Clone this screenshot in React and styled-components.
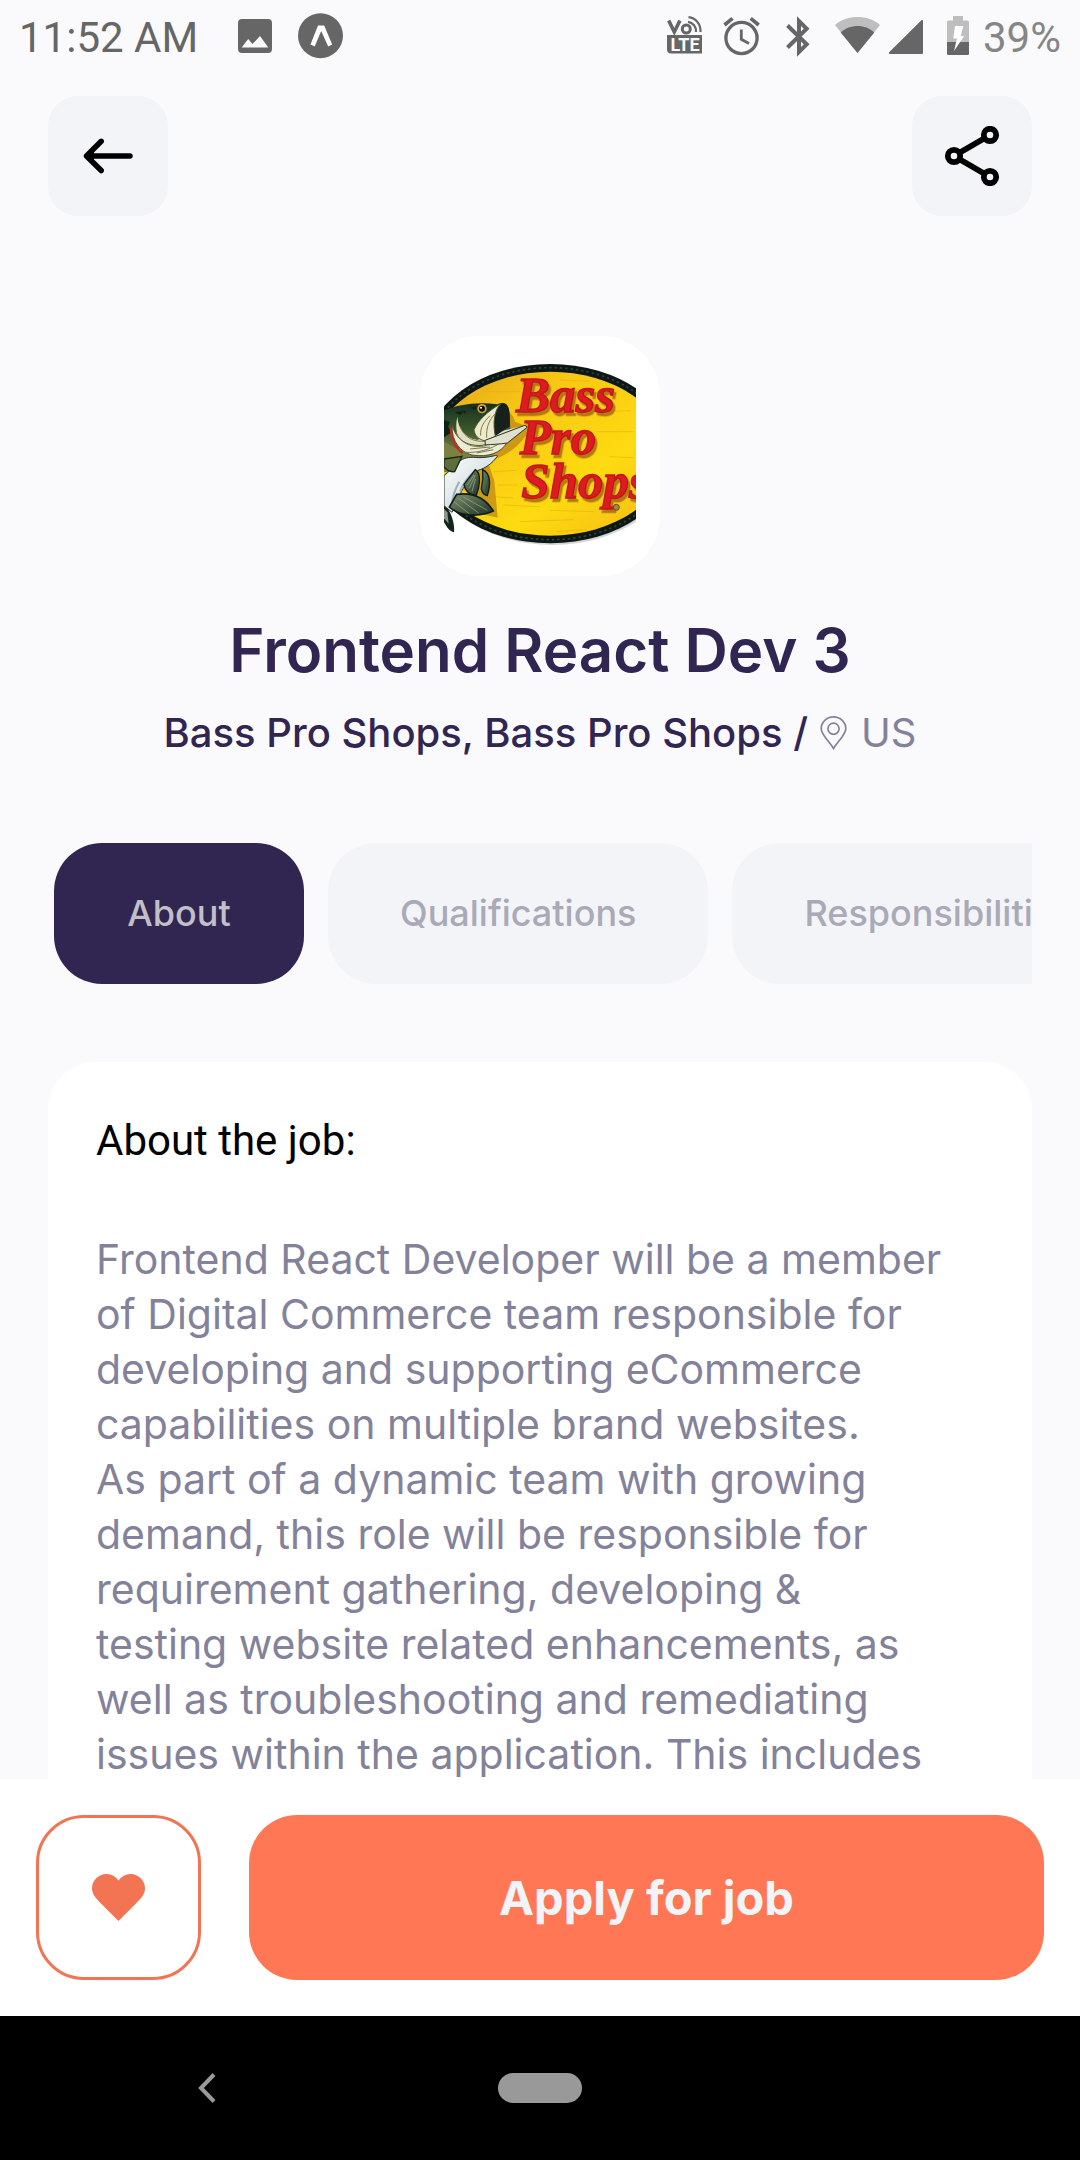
import React, { useState } from "react";
import styled, { createGlobalStyle, css } from "styled-components";

const color = {
  page: "#fafafc",
  surface: "#f3f4f8",
  primary: "#312651",
  secondary: "#83829a",
  accent: "#ff7754",
  like: "#f37453",
  status: "#666666",
};

const sans = `Inter, "Liberation Sans", sans-serif`;
const system = `Roboto, "Liberation Sans", sans-serif`;

const GlobalStyle = createGlobalStyle`
  *, *::before, *::after { box-sizing: border-box; }
  body { margin: 0; background: ${color.page}; font-family: ${sans}; }
  button { margin: 0; padding: 0; border: 0; background: none; font: inherit; cursor: pointer; }
  h1, h2, p { margin: 0; font-weight: 400; }
  svg { display: block; flex: none; }
`;

const Screen = styled.div`
  display: flex;
  flex-direction: column;
  height: 100vh;
  background: ${color.page};
`;

const StatusBar = styled.div`
  flex: none;
  display: flex;
  justify-content: space-between;
  height: 76px;
  padding: 0 19px;
  font-family: ${system};
  font-size: 42px;
  line-height: 76px;
  color: ${color.status};
`;

const StatusGroup = styled.div`
  display: flex;
  align-items: center;
`;

const Battery = styled.span`
  color: #868686;
`;

const Header = styled.header`
  flex: none;
  display: flex;
  justify-content: space-between;
  padding: 20px 48px 0;
`;

const IconButton = styled.button`
  display: flex;
  align-items: center;
  justify-content: center;
  width: 120px;
  height: 120px;
  border-radius: 30px;
  background: ${color.surface};
`;

const Content = styled.main`
  flex: 1;
  min-height: 0;
  overflow: hidden auto;
  scrollbar-width: none;
  display: flex;
  flex-direction: column;
  padding: 120px 48px 0;
`;

const Company = styled.section`
  flex: none;
  display: flex;
  flex-direction: column;
  align-items: center;
`;

const LogoBox = styled.div`
  padding: 24px;
  border-radius: 60px;
  background: #fff;
`;

const LogoWord = styled.text`
  font: italic 700 153px "Liberation Serif", serif;
  fill: #dd1c1f;
  stroke: #c4141a;
  stroke-width: 4px;
`;

const LogoWords = styled.g`
  filter: drop-shadow(7px 10px 2px rgba(160, 100, 15, 0.8));
`;

const JobTitle = styled.h1`
  margin-top: 35px;
  font-size: 60px;
  font-weight: 600;
  line-height: 78px;
  color: ${color.primary};
`;

const CompanyLine = styled.div`
  display: flex;
  align-items: center;
  margin-top: 16px;
  font-size: 40px;
  line-height: 56px;
`;

const CompanyName = styled.span`
  font-weight: 500;
  color: ${color.primary};
`;

const Location = styled.span`
  display: flex;
  align-items: center;
  gap: 14px;
  padding-left: 12px;
  color: ${color.secondary};
`;

const Tabs = styled.div`
  flex: none;
  display: flex;
  gap: 24px;
  margin-top: 82px;
  padding-left: 6px;
  overflow: auto hidden;
  scrollbar-width: none;
`;

const Tab = styled.button`
  flex: none;
  min-width: 250px;
  padding: 48px 72px;
  border-radius: 48px;
  background: ${color.surface};
  font-size: 36px;
  font-weight: 500;
  line-height: 45px;
  color: #aaa9b8;
  ${(p) =>
    p.$active &&
    css`
      background: ${color.primary};
      color: #c1c0c8;
    `}
`;

const Card = styled.section`
  flex: none;
  margin-top: 78px;
  padding: 51px 48px;
  border-radius: 48px;
  background: #fff;
`;

const CardTitle = styled.h2`
  font-family: ${system};
  font-size: 42px;
  line-height: 56px;
  color: #000;
`;

const Description = styled.p`
  margin-top: 63px;
  font-size: 41px;
  line-height: 55px;
  color: ${color.secondary};
  white-space: pre-line;
`;

const Footer = styled.footer`
  flex: none;
  display: flex;
  gap: 48px;
  padding: 36px;
  background: #fff;
`;

const LikeButton = styled.button`
  display: flex;
  align-items: center;
  justify-content: center;
  width: 165px;
  height: 165px;
  border: 3px solid ${color.like};
  border-radius: 48px;
  color: ${color.like};
`;

const ApplyButton = styled.button`
  flex: 1;
  border-radius: 48px;
  background: ${color.accent};
  font-size: 47px;
  font-weight: 700;
  color: ${color.surface};
`;

const NavBar = styled.nav`
  flex: none;
  display: grid;
  grid-template-columns: 1fr 84px 1fr;
  align-items: center;
  justify-items: center;
  height: 144px;
  background: #000;
`;

const NavBack = styled.button`
  display: flex;
  justify-content: center;
  width: 84px;
  padding: 24px 0;
  margin-right: 84px;
`;

const NavHome = styled.button`
  width: 84px;
  height: 30px;
  border-radius: 15px;
  background: #999;
`;

const StatusIcon = ({ x, width, children }) => (
  <svg width={width} height="76" viewBox={`${x} 0 ${width} 76`} fill={color.status} aria-hidden="true">
    {children}
  </svg>
);

const NotificationIcons = () => (
  <>
    <StatusIcon x={197} width={77}>
      <path
        fillRule="evenodd"
        d="M241 19h26a4 4 0 0 1 4 4v26a4 4 0 0 1-4 4h-26a4 4 0 0 1-4-4V23a4 4 0 0 1 4-4zM240.700 47.500h26.600l-8.300-11.500-7.500 8-4.300-5z"
      />
    </StatusIcon>
    <StatusIcon x={274} width={70}>
      <circle cx="319.500" cy="35.700" r="22.500" />
      <path fill="#fff" d="M309.500 44.500 317 25.500h6.200l8 19-4 2-7-15.500-6.500 15.500z" />
    </StatusIcon>
  </>
);

const SystemIcons = () => (
  <>
    <StatusIcon x={660} width={52}>
      <path d="M668.700 20.500l5.600 11.500 5.600-11.500" fill="none" stroke={color.status} strokeWidth="3.600" />
      <circle cx="686.300" cy="29" r="4" fill="none" stroke={color.status} strokeWidth="3" />
      <path
        d="M688.500 17.200c7 .6 12.500 7 12 14.800M688 21.800c5 .8 8.500 5 8 10.200"
        fill="none"
        stroke={color.status}
        strokeWidth="2.200"
      />
      <path d="M667 35h35v18.500h-31a4 4 0 0 1-4-4z" />
      <text x="685" y="51" textAnchor="middle" fontFamily="Roboto, sans-serif" fontWeight="700" fontSize="18" fill="#fafafc">
        LTE
      </text>
    </StatusIcon>
    <StatusIcon x={712} width={60}>
      <g fill="none" stroke={color.status} strokeWidth="3.300">
        <circle cx="741.500" cy="38" r="15.600" />
        <path d="M741.300 29.500v9.800l7.700 4.200" strokeWidth="2.800" />
        <path d="M724.500 25l8-6.700M758.700 25l-8-6.700" strokeWidth="3.600" />
      </g>
    </StatusIcon>
    <StatusIcon x={772} width={50}>
      <path
        d="M787.500 25.500l19.200 18.700-7.700 7.800V21l7.700 7.800-19.200 18.700"
        fill="none"
        stroke={color.status}
        strokeWidth="4"
      />
    </StatusIcon>
    <StatusIcon x={822} width={62}>
      <path fill="#bebebf" d="M857.500 53 835 25c12-10.600 33-10.600 45 0z" />
      <path d="M857.500 53 840.700 32.500c9-8.600 24.600-8.600 33.600 0z" />
    </StatusIcon>
    <StatusIcon x={884} width={51}>
      <path d="M890 54c-1.500 0-1.500-1.200-.6-2l31.800-31.500c1-.9 1.800-.5 1.800.8V52.500c0 1-.5 1.500-1.500 1.500z" />
    </StatusIcon>
    <StatusIcon x={935} width={48}>
      <path fill="#bebebf" d="M953 16h10v4.500h4.500q1.500 0 1.500 1.500v20h-22V22q0-1.500 1.500-1.500h4.500z" />
      <path d="M947 42h22v11.500q0 1.500-1.500 1.500h-19q-1.500 0-1.500-1.500z" />
      <path fill="#fff" d="M955 26h8.300l-2.600 10h3.500L954 51l3-12.500h-3.700z" />
    </StatusIcon>
  </>
);

const ArrowIcon = () => (
  <svg width="60" height="60" viewBox="78 126 60 60" aria-hidden="true">
    <path
      d="M130 156H87M101.200 141.300 86.500 156l14.700 14.500"
      fill="none"
      stroke="#000"
      strokeWidth="5.500"
      strokeLinecap="round"
      strokeLinejoin="round"
    />
    <path d="M86 156l8-7v14z" />
  </svg>
);

const ShareIcon = () => (
  <svg width="60" height="60" viewBox="942 126 60 60" aria-hidden="true">
    <g fill="none" stroke="#000" strokeWidth="5.800">
      <circle cx="990" cy="135" r="6.200" />
      <circle cx="954" cy="156" r="6.200" />
      <circle cx="990" cy="177" r="6.200" />
      <path d="M959.500 152.800l25-14.600M959.500 159.200l25 14.600" />
    </g>
  </svg>
);

const PinIcon = () => (
  <svg width="27" height="34" viewBox="0 0 27 34" fill="none" stroke={color.secondary} strokeWidth="1.700" aria-hidden="true">
    <path d="M13.500 32.500C9.500 25.500 1.200 19 1.200 12.500a12.300 11.600 0 0 1 24.600 0C25.800 19 17.500 25.500 13.500 32.500z" />
    <circle cx="13.500" cy="12.700" r="5.600" />
  </svg>
);

const HeartIcon = () => (
  <svg width="53" height="47" viewBox="0 0 53 47" fill="currentColor" aria-hidden="true">
    <path d="M26.500 47 9 29.500C3 23.500 0 19.500 0 14.500 0 6.500 6.500 0 14.500 0c5 0 9 2.200 12 6.500C29.500 2.200 33.500 0 38.500 0 46.500 0 53 6.500 53 14.500c0 5-3 9-9 15z" />
  </svg>
);

const CompanyLogo = () => (
  <svg width="192" height="192" viewBox="102 105 576 576" role="img" aria-label="Bass Pro Shops">
    <defs>
      <linearGradient id="board" x1="0" y1="0" x2="1" y2="1">
        <stop offset="0" stopColor="#e0a31c" />
        <stop offset="0.3" stopColor="#f9c714" />
        <stop offset="0.65" stopColor="#fddb10" />
        <stop offset="1" stopColor="#f3b716" />
      </linearGradient>
      <linearGradient id="back" x1="0" y1="0" x2="0" y2="1">
        <stop offset="0" stopColor="#16301f" />
        <stop offset="0.5" stopColor="#405a2c" />
        <stop offset="1" stopColor="#8b8c4a" />
      </linearGradient>
      <linearGradient id="belly" x1="0" y1="0" x2="1" y2="1">
        <stop offset="0" stopColor="#ffffff" />
        <stop offset="0.6" stopColor="#d5dfe3" />
        <stop offset="1" stopColor="#74827f" />
      </linearGradient>
      <linearGradient id="fin" x1="0" y1="0" x2="1" y2="1">
        <stop offset="0" stopColor="#829071" />
        <stop offset="1" stopColor="#1a3323" />
      </linearGradient>
    </defs>

    <ellipse cx="427" cy="394" rx="372" ry="266" fill="#b9b9b9" opacity="0.6" />
    <ellipse cx="421" cy="386" rx="375" ry="269" fill="#0d1714" />
    <ellipse cx="421" cy="386" rx="364" ry="258" fill="none" stroke="#33413d" strokeWidth="5" strokeDasharray="7 9" />
    <ellipse cx="421" cy="386" rx="352" ry="246" fill="url(#board)" />
    <g fill="none" stroke="#dfa416" strokeWidth="2" opacity="0.7">
      <path d="M220 200h110M450 165l90 4M580 260l80-3M560 320h110M300 350l-40 6M250 440l70-4M262 480h60M280 540l110 5M330 590l160-6M420 556l130 4M250 515l60 4M600 395l70 3M440 620l90-6" />
    </g>

    <path d="M180 262C230 240 300 235 315 290l48 18c-40 70-90 90-130 100l20 60 10 110-90-20z" fill="#b67d17" opacity="0.65" />

    <LogoWords>
      <LogoWord x="318" y="262">Bass</LogoWord>
      <LogoWord x="329" y="387">Pro</LogoWord>
      <LogoWord x="334" y="520">Shops</LogoWord>
    </LogoWords>
    <circle cx="619" cy="547" r="9" fill="#a8873b" stroke="#5c4a25" strokeWidth="3" />

    <path d="M102 540c14 6 34 50 30 82-14-2-24-20-30-30z" fill="#14251d" />
    <path d="M102 552l10 10 4 34-14-16z" fill="#8b9a86" />
    <path d="M102 258c40-20 100-28 160-20 18-8 32-4 36 20l4 70-50 60-60 22-90-10z" fill="url(#back)" />
    <path d="M102 285l18 6-6 14 12 16-24 16zM134 262l26-4-8 12zM180 248l20-2-4 8zM160 256l10 4-8 6z" fill="#0d2117" />
    <path d="M102 350c30 12 48 36 96 44l-60 52-36-6z" fill="#7b8140" />
    <path
      d="M102 452c14-12 30-26 50-46 16-10 30-10 54-8 40 0 58-12 56-4-16 22-36 36-58 42-16 24-34 34-50 64-8 18-14 30-28 62l-24-20z"
      fill="url(#belly)"
      stroke="#26332d"
      strokeWidth="3"
    />
    <path d="M150 500c10-30 30-50 48-66M126 540c2-30 10-50 22-70" fill="none" stroke="#9fb0b5" strokeWidth="6" />
    <path d="M102 402l54-8-22 46c-12 2-24-6-32-14z" fill="#5e6d3a" stroke="#16291b" strokeWidth="4" />
    <path d="M142 275c-10 44 4 82 34 94 30 10 60 0 84-8l70-44 24-18-92 22-60 24c-34-6-58-32-60-70z" fill="#e2e0c2" />
    <path d="M126 300c-2 50 26 82 60 90 50 8 86-6 106-38l58-48-90 44c-60 28-118 12-134-48z" fill="#ecebd4" stroke="#4a4f35" strokeWidth="3" />
    <path d="M122 308c2 38 18 64 36 76" fill="none" stroke="#c62a1f" strokeWidth="6" />
    <path d="M272 236c22-8 30 20 27 68l-44 30c-16-36-14-72 17-98z" fill="#17211c" />
    <path d="M272 236c-20 20-24 60-16 98l-30 14c-20-4-32-16-34-34 14-30 40-54 80-78z" fill="#eceacb" stroke="#53583b" strokeWidth="3" />
    <path
      d="M256 266c-18 18-28 40-26 72M240 272c-20 20-30 36-28 60M150 305c14 34 40 46 78 44M138 322c14 34 50 50 92 40M166 382c34 2 74-6 110-32M180 372l60-6M200 384l50-10"
      fill="none"
      stroke="#7d7b4d"
      strokeWidth="3"
    />
    <path d="M225 346l122-46 3 8-58 46c-24 4-46 4-66 6z" fill="#dfe0cd" stroke="#2c3527" strokeWidth="3" />
    <circle cx="216" cy="251" r="14" fill="#c9a23b" />
    <circle cx="216" cy="251" r="9" fill="#10120d" />
    <circle cx="213" cy="248" r="3" fill="#fff" />
    <path d="M196 434c16 8 16 44 2 78-18 0-34-16-36-34z" fill="url(#fin)" stroke="#0f1f17" strokeWidth="4" />
    <path d="M218 434c22 10 26 40 14 78-10-2-16-10-18-20 4-18 6-38 4-58z" fill="url(#fin)" stroke="#0f1f17" strokeWidth="4" />
    <path d="M140 508c40-6 80 2 110 50-34 16-96 20-132-12z" fill="url(#fin)" stroke="#0f1f17" strokeWidth="5" />
    <path
      d="M146 520l60 44M160 516l72 40M132 530l46 36M172 480l20-30M178 490l18-40M186 500l10-38"
      fill="none"
      stroke="#a5b08c"
      strokeWidth="2"
    />
  </svg>
);

const description = `Frontend React Developer will be a member
of Digital Commerce team responsible for
developing and supporting eCommerce
capabilities on multiple brand websites.
As part of a dynamic team with growing
demand, this role will be responsible for
requirement gathering, developing &
testing website related enhancements, as
well as troubleshooting and remediating
issues within the application. This includes`;

const tabs = ["About", "Qualifications", "Responsibilities"];

export default function App() {
  const [active, setActive] = useState("About");
  return (
    <>
      <GlobalStyle />
      <Screen>
        <StatusBar>
          <StatusGroup>
            <span>11:52 AM</span>
            <NotificationIcons />
          </StatusGroup>
          <StatusGroup>
            <SystemIcons />
            <Battery>39%</Battery>
          </StatusGroup>
        </StatusBar>
        <Header>
          <IconButton type="button" aria-label="Back">
            <ArrowIcon />
          </IconButton>
          <IconButton type="button" aria-label="Share">
            <ShareIcon />
          </IconButton>
        </Header>
        <Content>
          <Company>
            <LogoBox>
              <CompanyLogo />
            </LogoBox>
            <JobTitle>Frontend React Dev 3</JobTitle>
            <CompanyLine>
              <CompanyName>Bass Pro Shops, Bass Pro Shops /</CompanyName>
              <Location>
                <PinIcon />
                US
              </Location>
            </CompanyLine>
          </Company>
          <Tabs role="tablist">
            {tabs.map((name) => (
              <Tab
                key={name}
                type="button"
                role="tab"
                aria-selected={name === active}
                $active={name === active}
                onClick={() => setActive(name)}
              >
                {name}
              </Tab>
            ))}
          </Tabs>
          <Card>
            <CardTitle>About the job:</CardTitle>
            <Description>{description}</Description>
          </Card>
        </Content>
        <Footer>
          <LikeButton type="button" aria-label="Save job">
            <HeartIcon />
          </LikeButton>
          <ApplyButton type="button">Apply for job</ApplyButton>
        </Footer>
        <NavBar>
          <NavBack type="button" aria-label="Navigate back">
            <svg width="18" height="30" viewBox="0 0 18 30" aria-hidden="true">
              <path d="M16 1.500 3 15l13 13.500" fill="none" stroke="#999" strokeWidth="4" />
            </svg>
          </NavBack>
          <NavHome type="button" aria-label="Home" />
        </NavBar>
      </Screen>
    </>
  );
}
